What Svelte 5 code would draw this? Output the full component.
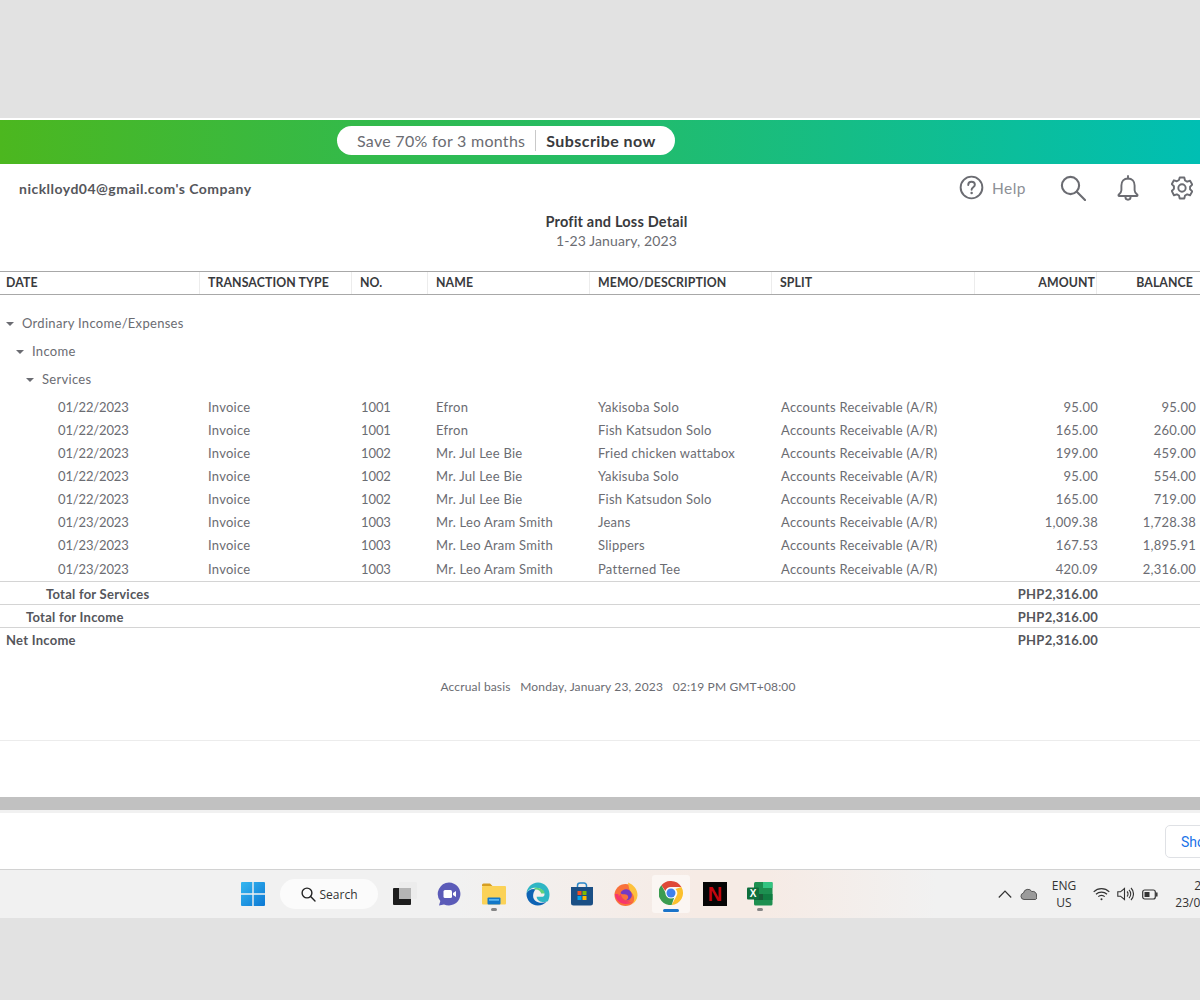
<script>
	const cols = ["DATE", "TRANSACTION TYPE", "NO.", "NAME", "MEMO/DESCRIPTION", "SPLIT", "AMOUNT", "BALANCE"];

	const groups = [
		{ label: "Ordinary Income/Expenses", cls: "lvl0" },
		{ label: "Income", cls: "lvl1" },
		{ label: "Services", cls: "lvl2" }
	];

	const rows = [
		["01/22/2023", "1001", "Efron", "Yakisoba Solo", "95.00", "95.00"],
		["01/22/2023", "1001", "Efron", "Fish Katsudon Solo", "165.00", "260.00"],
		["01/22/2023", "1002", "Mr. Jul Lee Bie", "Fried chicken wattabox", "199.00", "459.00"],
		["01/22/2023", "1002", "Mr. Jul Lee Bie", "Yakisuba Solo", "95.00", "554.00"],
		["01/22/2023", "1002", "Mr. Jul Lee Bie", "Fish Katsudon Solo", "165.00", "719.00"],
		["01/23/2023", "1003", "Mr. Leo Aram Smith", "Jeans", "1,009.38", "1,728.38"],
		["01/23/2023", "1003", "Mr. Leo Aram Smith", "Slippers", "167.53", "1,895.91"],
		["01/23/2023", "1003", "Mr. Leo Aram Smith", "Patterned Tee", "420.09", "2,316.00"]
	];

	const totals = [
		{ label: "Total for Services", cls: "t2" },
		{ label: "Total for Income", cls: "t1" },
		{ label: "Net Income", cls: "t0" }
	];
</script>

<div class="page">
	<div class="banner">
		<div class="pill">
			<span class="save">Save 70% for 3 months</span>
			<span class="subscribe">Subscribe now</span>
		</div>
	</div>

	<main class="report">
		<header class="topbar">
			<div class="company">nicklloyd04@gmail.com's Company</div>
			<div class="actions">
				<svg class="help-icon" width="25" height="25" viewBox="0 0 26 26" fill="none" stroke="#6b6c72">
					<circle cx="13" cy="13" r="11.3" stroke-width="2" />
					<path d="M9.6 10.4c0-2 1.5-3.3 3.5-3.3s3.4 1.2 3.4 3c0 2.6-3.4 2.6-3.4 5.2" stroke-width="2" stroke-linecap="round" />
					<circle cx="13.1" cy="18.7" r="1.3" fill="#6b6c72" stroke="none" />
				</svg>
				<span class="help">Help</span>
				<svg class="search-icon" width="26" height="26" viewBox="0 0 26 26" fill="none" stroke="#6b6c72" stroke-width="2.1">
					<circle cx="10.5" cy="10.5" r="8.6" />
					<path d="M16.8 16.8L25 25" stroke-linecap="round" />
				</svg>
				<svg class="bell-icon" width="22" height="26" viewBox="0 0 22 26" fill="none" stroke="#6b6c72" stroke-width="1.9" stroke-linejoin="round">
					<path d="M11 3.5c-4 0-6.6 3-6.6 7v4.8c0 2-1.4 3.2-2.7 4.4-.5.5-.2 1.3.5 1.3h17.6c.7 0 1-.8.5-1.3-1.3-1.2-2.7-2.4-2.7-4.4v-4.8c0-4-2.6-7-6.6-7z" />
					<path d="M11 3.5V1" stroke-linecap="round" />
					<path d="M8.4 21.8c0 1.7 1.1 2.9 2.6 2.9s2.6-1.2 2.6-2.9" />
				</svg>
				<svg class="gear-icon" width="22" height="24" viewBox="0 0 24 26" fill="none" stroke="#6b6c72" stroke-width="2.1" stroke-linejoin="round">
					<path d="M9.5 1.5h5l.8 3.3 2.3 1.3 3.2-1 2.4 4.2-2.4 2.3v2.800l2.400 2.300-2.400 4.200-3.200-1-2.300 1.300-.8 3.300h-5l-.8-3.300-2.300-1.300-3.200 1L.8 16.200l2.400-2.300v-2.800L.8 8.800l2.400-4.200 3.200 1 2.300-1.300z" />
					<circle cx="12" cy="13" r="4" />
				</svg>
			</div>
		</header>

		<div class="title-block">
			<h1>Profit and Loss Detail</h1>
			<p>1-23 January, 2023</p>
		</div>

		<div class="grid head">
			{#each cols as col, i}
				<div class="th" class:num={i > 5}>{col}</div>
			{/each}
		</div>

		<div class="groups">
			{#each groups as group}
				<div class="group {group.cls}"><span class="caret"></span>{group.label}</div>
			{/each}
		</div>

		<div class="body">
			{#each rows as row}
				<div class="grid row">
					<div class="td date">{row[0]}</div>
					<div class="td">Invoice</div>
					<div class="td no">{row[1]}</div>
					<div class="td">{row[2]}</div>
					<div class="td">{row[3]}</div>
					<div class="td split">Accounts Receivable (A/R)</div>
					<div class="td amount">{row[4]}</div>
					<div class="td balance">{row[5]}</div>
				</div>
			{/each}
		</div>

		{#each totals as total}
			<div class="total">
				<span class={total.cls}>{total.label}</span>
				<span class="total-amount">PHP2,316.00</span>
			</div>
		{/each}

		<div class="basis">Accrual basis&nbsp;&nbsp; Monday, January 23, 2023&nbsp;&nbsp; 02:19 PM GMT+08:00</div>
		<div class="report-foot"></div>
	</main>

	<div class="scrollbar"></div>

	<div class="download-bar">
		<div class="show-btn">Show all</div>
	</div>

	<footer class="taskbar">
		<div class="apps">
			<svg class="app" width="24" height="24" viewBox="0 0 24 24">
				<defs>
					<linearGradient id="win" x1="0" y1="0" x2="1" y2="1">
						<stop offset="0" stop-color="#35b7f0" />
						<stop offset="1" stop-color="#0c78d4" />
					</linearGradient>
				</defs>
				<path fill="url(#win)" d="M0 1a1 1 0 0 1 1-1h10.3v11.3H0zM12.7 0H23a1 1 0 0 1 1 1v10.3H12.7zM0 12.7h11.3V24H1a1 1 0 0 1-1-1zM12.7 12.7H24V23a1 1 0 0 1-1 1H12.7z" />
			</svg>

			<div class="search">
				<svg width="15" height="15" viewBox="0 0 15 15" fill="none" stroke="#222" stroke-width="1.4">
					<circle cx="6" cy="6" r="4.9" />
					<path d="M9.6 9.6L14 14" stroke-linecap="round" />
				</svg>
				<span>Search</span>
			</div>

			<svg class="app taskview" width="24" height="24" viewBox="0 0 24 24">
				<rect x="6" y="0" width="18" height="17" rx="1" fill="#ececec" />
				<rect x="0" y="6" width="18" height="17" rx="1" fill="#1d1d1d" />
				<rect x="6" y="6" width="12" height="11" fill="#b5b5b5" />
			</svg>

			<svg class="app" width="24" height="24" viewBox="0 0 24 24">
				<path d="M12 .5a11.5 11.5 0 1 1-5 21.9L2 23.6l1.3-4.5A11.5 11.5 0 0 1 12 .5z" fill="#5b5bb8" />
				<rect x="6.5" y="8" width="8.5" height="8" rx="1.5" fill="#fff" />
				<path d="M16 11l3-2v6l-3-2z" fill="#fff" />
			</svg>

			<div class="app-wrap">
				<svg width="26" height="24" viewBox="0 0 26 24">
					<path d="M1 3a1.5 1.5 0 0 1 1.5-1.5H9l2.5 2.5H1z" fill="#d69e22" />
					<rect x="1" y="4" width="24" height="18.5" rx="1" fill="#fbd257" />
					<rect x="6.5" y="15.5" width="13" height="7" rx="1" fill="#1277c7" />
					<rect x="8" y="17" width="10" height="1.8" fill="#58b4ee" />
				</svg>
				<span class="dot"></span>
			</div>

			<svg class="app" width="24" height="24" viewBox="0 0 24 24">
				<path d="M12 .5C5.8.5.8 5.5.5 11.6c1.6-3.8 5.3-5.800 9-5.800 5.500 0 9 3.500 9 6.600 0 1.400-1.200 2.300-2.800 2.300h-5c0 3.600 3.700 5.400 7 5.400 1.700 0 3.300-.4 4.300-1 .8-1.800 1.500-4 1.500-6.800C23.500 5.800 18.500.5 12 .5z" fill="#2fb6c4" />
				<path d="M.5 11.600c-.3 6.500 4.900 12 11.300 12 3.600 0 6.600-1.500 8.600-3.800-5.600 2.500-13.300.6-13.300-6 0-2.400 1-4.700 2.400-6.500C5.800 6.500 2 8.300.5 11.600z" fill="#0d63b4" />
				<path d="M9.500 5.800c-.8.300-1.500 1-2 2 .6-.3 1.300-.4 2.200-.4 2.800 0 5.300 2 5.500 4.200h3.300c.3-3.200-3.700-5.800-9-5.800z" fill="#5fd37c" />
			</svg>

			<svg class="app" width="24" height="24" viewBox="0 0 24 24">
				<path d="M7.500 6V3.500A2.500 2.500 0 0 1 10 1h4a2.500 2.500 0 0 1 2.500 2.500V6" fill="none" stroke="#2a87c9" stroke-width="1.500" />
				<path d="M1 5h22v16a2.500 2.500 0 0 1-2.500 2.500h-17A2.500 2.500 0 0 1 1 21z" fill="#1a4f85" />
				<rect x="7.500" y="9" width="4" height="4" fill="#f25022" />
				<rect x="12.500" y="9" width="4" height="4" fill="#7fba00" />
				<rect x="7.500" y="14" width="4" height="4" fill="#00a4ef" />
				<rect x="12.500" y="14" width="4" height="4" fill="#ffb900" />
			</svg>

			<svg class="app" width="24" height="24" viewBox="0 0 24 24">
				<circle cx="11.500" cy="13" r="11" fill="#f9713a" />
				<path d="M14 .5c5.500 2 9.800 7 9.500 12.800-.2 4.200-2.500 7-5 8.700 2-3 2.200-6.500.7-9.200-1-2-3.200-3.300-4-6-.5-2-.8-4-1.200-6.300z" fill="#fdc13c" />
				<path d="M6.500 11c1.500-3.500 5.500-4.500 8.500-3 2.500 1.500 3.500 4.500 2.500 7-1 2.300-3.500 3.800-6 3.300 2-.7 3-2.200 2.600-3.800-.4-1.500-2-2.300-3.600-2.200-1.500 0-3 .2-4-1.300z" fill="#7539c4" />
				<path d="M7 12c.2 3 2.500 6 6 6.500 1.500.2 3-.2 4-1-1 2-3 3-5.500 3-3.500 0-6-2.500-6.500-5.500-.2-1.200 1-2.500 2-3z" fill="#f23f61" />
				<path d="M.8 12c.6 6 5.600 10 10.900 10 2.500 0 4.800-.8 6.800-2.500-3 1.300-7 1.200-10-.8-3-2-4-4.500-4.200-6.700z" fill="#f7356f" />
			</svg>

			<div class="chrome-tile">
				<svg width="24" height="24" viewBox="0 0 24 24">
					<path d="M12 0a12 12 0 0 1 10.400 6H12a6 6 0 0 0-5.700 4L2.400 4.300A12 12 0 0 1 12 0z" fill="#df4838" />
					<path d="M22.400 6A12 12 0 0 1 12.600 24l4.600-8.500A6 6 0 0 0 16.500 8z" fill="#fbc02d" />
					<path d="M2.400 4.300l4.900 8.700a6 6 0 0 0 8 3.300L12.600 24A12 12 0 0 1 2.400 4.300z" fill="#3b9c50" />
					<circle cx="12" cy="12" r="5.600" fill="#fff" />
					<circle cx="12" cy="12" r="4.500" fill="#3f80ec" />
				</svg>
				<span class="active-bar"></span>
			</div>

			<div class="netflix">N</div>

			<div class="app-wrap">
				<svg width="26" height="24" viewBox="0 0 26 24">
					<path d="M7 1.500A1.500 1.500 0 0 1 8.500 0H24a1.500 1.500 0 0 1 1.500 1.500V22a1.500 1.500 0 0 1-1.500 1.500H8.500A1.500 1.500 0 0 1 7 22z" fill="#1d8f50" />
					<rect x="16" y="0" width="9.500" height="6" fill="#33c481" />
					<rect x="16" y="12" width="9.500" height="6" fill="#107c41" />
					<rect x="7" y="12" width="9" height="6" fill="#185c37" />
					<rect x="0" y="5.500" width="12" height="12" rx="1" fill="#0f6f3c" />
					<text x="6" y="15" class="xl">X</text>
				</svg>
				<span class="dot"></span>
			</div>
		</div>

		<div class="tray">
			<svg class="chev" width="14" height="8" viewBox="0 0 14 8" fill="none" stroke="#333" stroke-width="1.200">
				<path d="M.8 7.500L7 1l6.200 6.500" />
			</svg>
			<svg class="cloud" width="17" height="12" viewBox="0 0 17 12">
				<path d="M4 11.500a3.300 3.300 0 0 1-.5-6.500 4.500 4.500 0 0 1 8.300-1.500 3.800 3.800 0 0 1 4.700 4.500 2.400 2.400 0 0 1-1 3.500z" fill="#9b9b9b" stroke="#4b4b4b" stroke-width=".9" />
			</svg>
			<div class="lang">ENG<br />US</div>
			<svg class="wifi" width="17" height="14" viewBox="0 0 17 14" fill="none" stroke="#333" stroke-width="1.200">
				<path d="M.7 4.800a11 11 0 0 1 15.600 0M3 7.300a7.800 7.800 0 0 1 11 0M5.300 9.700a4.500 4.500 0 0 1 6.400 0" />
				<circle cx="8.500" cy="12.300" r="1" fill="#333" stroke="none" />
			</svg>
			<svg class="vol" width="17" height="14" viewBox="0 0 17 14" fill="none" stroke="#333" stroke-width="1.100">
				<path d="M.8 4.800h2.700L7.500 1.500v11L3.500 9.200H.8z" />
				<path d="M10 4.500a3.500 3.500 0 0 1 0 5M12 2.800a6 6 0 0 1 0 8.400M14 1a8.500 8.500 0 0 1 0 12" />
			</svg>
			<svg class="batt" width="16" height="11" viewBox="0 0 16 11" fill="none" stroke="#333" stroke-width="1.200">
				<rect x=".7" y="1" width="12.600" height="9" rx="2" />
				<rect x="2.500" y="3" width="5" height="5" fill="#333" stroke="none" />
				<path d="M14.800 4v3" stroke-width="1.500" stroke-linecap="round" />
			</svg>
			<div class="clock">2:19 PM<br />23/01/2023</div>
		</div>
	</footer>
</div>

<style>
	:global(body) {
		background: #e2e2e2;
		overflow: hidden;
	}

	.page {
		width: 1200px;
		height: 1000px;
		padding-top: 118px;
		box-sizing: border-box;
		overflow: hidden;
		font-family: Lato, "Liberation Sans", sans-serif;
		color: #6b6c72;
	}

	.banner {
		height: 41px;
		border-top: 2px solid #fff;
		background: linear-gradient(90deg, #4cb71f 0%, #2bbb58 40%, #00bfb3 100%);
		display: flex;
		align-items: center;
		padding-left: 337px;
		padding-bottom: 3px;
	}

	.pill {
		width: 338px;
		height: 29px;
		box-sizing: border-box;
		background: #fff;
		border-radius: 15px;
		display: flex;
		align-items: center;
		padding-left: 20px;
		font-size: 16px;
		white-space: nowrap;
	}

	.save {
		color: #6b6c72;
		letter-spacing: 0.28px;
		padding-right: 10px;
		border-right: 1px solid #c9c9c9;
		line-height: 21px;
	}

	.subscribe {
		color: #393a3d;
		font-weight: 700;
		padding-left: 10px;
		letter-spacing: 0.42px;
	}

	.report {
		background: #fff;
		height: 633px;
	}

	.topbar {
		height: 49px;
		display: flex;
		align-items: center;
		justify-content: space-between;
		padding-left: 19px;
	}

	.company {
		font-size: 14px;
		font-weight: 700;
		letter-spacing: 0.48px;
		color: #55565b;
	}

	.actions {
		display: flex;
		align-items: center;
		margin-right: 7px;
		margin-top: -2px;
	}

	.help {
		font-size: 15.5px;
		color: #8d9096;
		margin: 0 34px 0 8px;
		letter-spacing: 0.5px;
	}

	.bell-icon {
		margin-left: 31px;
	}

	.gear-icon {
		margin-left: 32px;
	}

	.title-block {
		height: 58px;
		text-align: center;
		padding-left: 33px;
	}

	h1 {
		margin: 0;
		font-size: 14.5px;
		line-height: 17px;
		font-weight: 700;
		color: #393a3d;
		letter-spacing: 0.2px;
	}

	.title-block p {
		margin: 2px 0 0;
		font-size: 14px;
		line-height: 17px;
		letter-spacing: 0.12px;
	}

	.grid {
		display: grid;
		grid-template-columns: 200px 152px 76px 162px 182px 203px 122px 103px;
	}

	.head {
		height: 22px;
		border-top: 1px solid #a8a8a8;
		border-bottom: 1px solid #a8a8a8;
	}

	.th {
		font-size: 12.3px;
		font-weight: 700;
		color: #393a3d;
		line-height: 22px;
		padding-left: 8px;
		border-right: 1px solid #ececec;
		white-space: nowrap;
		letter-spacing: 0.1px;
	}

	.th:first-child {
		padding-left: 6px;
	}

	.th.num {
		text-align: right;
		padding: 0 1px 0 0;
	}

	.th:last-child {
		padding-right: 7px;
		border-right: 0;
	}

	.groups {
		padding-top: 14px;
	}

	.group {
		height: 28px;
		display: flex;
		align-items: center;
		font-size: 13px;
		letter-spacing: 0.3px;
	}

	.caret {
		width: 0;
		height: 0;
		border: 4px solid transparent;
		border-top: 4px solid #6b6c72;
		border-bottom: 0;
		margin: 1px 8px 0 0;
	}

	.lvl0 {
		padding-left: 6px;
	}

	.lvl1 {
		padding-left: 16px;
	}

	.lvl2 {
		padding-left: 26px;
	}

	.body {
		padding-top: 2px;
		border-bottom: 1px solid #d4d4d4;
		height: 189px;
		box-sizing: border-box;
	}

	.row {
		height: 23.15px;
		align-items: center;
		font-size: 13px;
		letter-spacing: 0.25px;
	}

	.td {
		padding-left: 8px;
		white-space: nowrap;
	}

	.date {
		padding-left: 58px;
		letter-spacing: -0.15px;
	}

	.no {
		padding-left: 9px;
		letter-spacing: -0.1px;
	}

	.split {
		padding-left: 9px;
	}

	.amount {
		text-align: right;
		padding: 0;
		margin-right: -1px;
	}

	.balance {
		text-align: right;
		padding: 0 4px 0 0;
	}

	.total {
		height: 21px;
		padding: 1px 102px 0 0;
		display: flex;
		align-items: center;
		justify-content: space-between;
		border-bottom: 1px solid #d4d4d4;
		font-size: 13px;
		font-weight: 700;
		color: #55565b;
		letter-spacing: 0.25px;
	}

	.total:nth-last-of-type(3) {
		border-bottom: 0;
	}

	.t2 {
		padding-left: 46px;
	}

	.t1 {
		padding-left: 26px;
	}

	.t0 {
		padding-left: 6px;
	}

	.basis {
		margin-top: 29px;
		font-size: 12px;
		line-height: 16px;
		text-align: center;
		padding-left: 36px;
		letter-spacing: 0.15px;
	}

	.report-foot {
		margin-top: 45px;
		border-top: 1px solid #ececec;
	}

	.scrollbar {
		height: 13px;
		background: #c1c1c1;
		border-bottom: 3px solid #f1f1f1;
	}

	.download-bar {
		height: 56px;
		background: #fff;
		display: flex;
		align-items: center;
		padding-left: 1165px;
		border-bottom: 1px solid #d2d2d2;
	}

	.show-btn {
		flex: none;
		height: 33px;
		line-height: 33px;
		width: 100px;
		box-sizing: border-box;
		border: 1px solid #dfe1e5;
		border-radius: 5px;
		padding-left: 15px;
		font-family: Roboto, "Liberation Sans", sans-serif;
		font-size: 14px;
		color: #1a73e8;
		white-space: nowrap;
	}

	.taskbar {
		height: 48px;
		display: flex;
		align-items: center;
		background: linear-gradient(90deg, #f1f1f1 0%, #f1f1f1 38%, #f6ebe5 58%, #f6ebe5 64%, #f1f1f1 78%, #f1f1f1 100%);
		font-family: "Open Sans", "Liberation Sans", sans-serif;
		color: #333;
		overflow: hidden;
	}

	.apps {
		display: flex;
		align-items: center;
		padding-left: 241px;
		width: 790px;
		flex: none;
		box-sizing: border-box;
	}

	.app {
		flex: none;
		margin-right: 20px;
	}

	.search {
		flex: none;
		width: 98px;
		height: 30px;
		margin: 0 15px 0 -5px;
		border-radius: 15px;
		background: #fbfbfb;
		display: flex;
		align-items: center;
		justify-content: center;
		gap: 4px;
		font-size: 12px;
	}

	.app-wrap {
		flex: none;
		width: 26px;
		height: 24px;
		margin-right: 19px;
		position: relative;
	}

	.dot {
		position: absolute;
		left: 10px;
		top: 26px;
		width: 6px;
		height: 3px;
		border-radius: 2px;
		background: #858585;
	}

	.chrome-tile {
		flex: none;
		position: relative;
		width: 38px;
		height: 38px;
		margin: 0 13px 0 -6px;
		border-radius: 3px;
		background: #fbf6f3;
		display: flex;
		justify-content: center;
		padding-top: 6px;
		box-sizing: border-box;
	}

	.active-bar {
		position: absolute;
		left: 11px;
		bottom: 1px;
		width: 16px;
		height: 3px;
		border-radius: 2px;
		background: #1a73c9;
	}

	.netflix {
		flex: none;
		width: 24px;
		height: 24px;
		margin-right: 20px;
		background: #050505;
		color: #c4060f;
		font-family: "Liberation Sans", sans-serif;
		font-size: 20px;
		font-weight: 700;
		line-height: 24px;
		text-align: center;
	}

	.xl {
		fill: #fff;
		font-family: "Liberation Sans", sans-serif;
		font-size: 10px;
		font-weight: 700;
		text-anchor: middle;
	}

	.tray {
		flex: none;
		display: flex;
		align-items: center;
		width: 410px;
		box-sizing: border-box;
		padding-left: 208px;
	}

	.cloud {
		margin-left: 8px;
		flex: none;
	}

	.chev {
		flex: none;
	}

	.lang {
		flex: none;
		width: 36px;
		margin-left: 9px;
		text-align: center;
		font-size: 12px;
		line-height: 17px;
	}

	.wifi {
		flex: none;
		margin-left: 11px;
	}

	.vol {
		flex: none;
		margin-left: 7px;
	}

	.batt {
		flex: none;
		margin-left: 8px;
	}

	.clock {
		flex: none;
		width: 72px;
		margin-left: 9px;
		text-align: right;
		font-size: 12px;
		line-height: 17px;
	}
</style>
